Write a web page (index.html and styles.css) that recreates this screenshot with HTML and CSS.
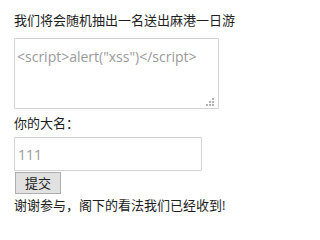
FILE: index.html
```html
<!DOCTYPE html>
<html lang="zh">
<head>
<meta charset="utf-8">
<link rel="stylesheet" href="styles.css">
</head>
<body>
<div class="page">
  <p class="line intro">我们将会随机抽出一名送出麻港一日游</p>
  <textarea class="comment" placeholder='<script>alert("xss")</script>'></textarea>
  <p class="line label">你的大名：</p>
  <input class="name" type="text" placeholder="111">
  <button class="submit" type="button">提交</button>
  <p class="line thanks">谢谢参与，阁下的看法我们已经收到!</p>
</div>
</body>
</html>
```

FILE: styles.css
```css
html, body {
  margin: 0;
  padding: 0;
  background: #ffffff;
}
.page {
  display: flex;
  flex-direction: column;
  align-items: flex-start;
  padding: 10px 0 0 14px;
  font-family: "Open Sans", "Noto Sans CJK SC", sans-serif;
  color: #1e1e1e;
}
.line {
  margin: 0;
  font-size: 13px;
  line-height: 20px;
  white-space: nowrap;
}
.comment {
  box-sizing: border-box;
  margin: 8px 0 0 0;
  width: 205px;
  height: 71px;
  padding: 8px 2px;
  border: 1px solid #d3d3d3;
  border-radius: 1px;
  font-family: "Open Sans", "Noto Sans CJK SC", sans-serif;
  font-size: 14px;
  line-height: 20px;
  color: #333;
  outline: none;
  resize: none;
  background-color: #fff;
  background-image:
    linear-gradient(#b4b4b4, #b4b4b4),
    linear-gradient(#b4b4b4, #b4b4b4),
    linear-gradient(#b4b4b4, #b4b4b4),
    linear-gradient(#b4b4b4, #b4b4b4),
    linear-gradient(#b4b4b4, #b4b4b4),
    linear-gradient(#b4b4b4, #b4b4b4);
  background-size: 2px 2px;
  background-repeat: no-repeat;
  background-origin: border-box;
  background-position:
    right 5px bottom 3px,
    right 8px bottom 3px,
    right 11px bottom 3px,
    right 5px bottom 6px,
    right 8px bottom 6px,
    right 5px bottom 9px;
}
.comment::placeholder,
.name::placeholder {
  color: #9a9a9a;
  opacity: 1;
}
.label {
  margin-top: 4px;
}
.name {
  box-sizing: border-box;
  margin: 4px 0 0 0;
  width: 188px;
  height: 34px;
  padding: 0 3px;
  border: 1px solid #d3d3d3;
  border-radius: 1px;
  font-family: "Open Sans", "Noto Sans CJK SC", sans-serif;
  font-size: 14px;
  outline: none;
}
.submit {
  box-sizing: border-box;
  margin: 1px 0 0 1px;
  width: 46px;
  height: 22px;
  padding: 0;
  background: #e1e1e1;
  border: 1px solid #adadad;
  border-radius: 0;
  font-family: "Noto Sans CJK SC", sans-serif;
  font-size: 13px;
  line-height: 20px;
  color: #222;
}
.thanks {
  margin-top: 1px;
}
```
